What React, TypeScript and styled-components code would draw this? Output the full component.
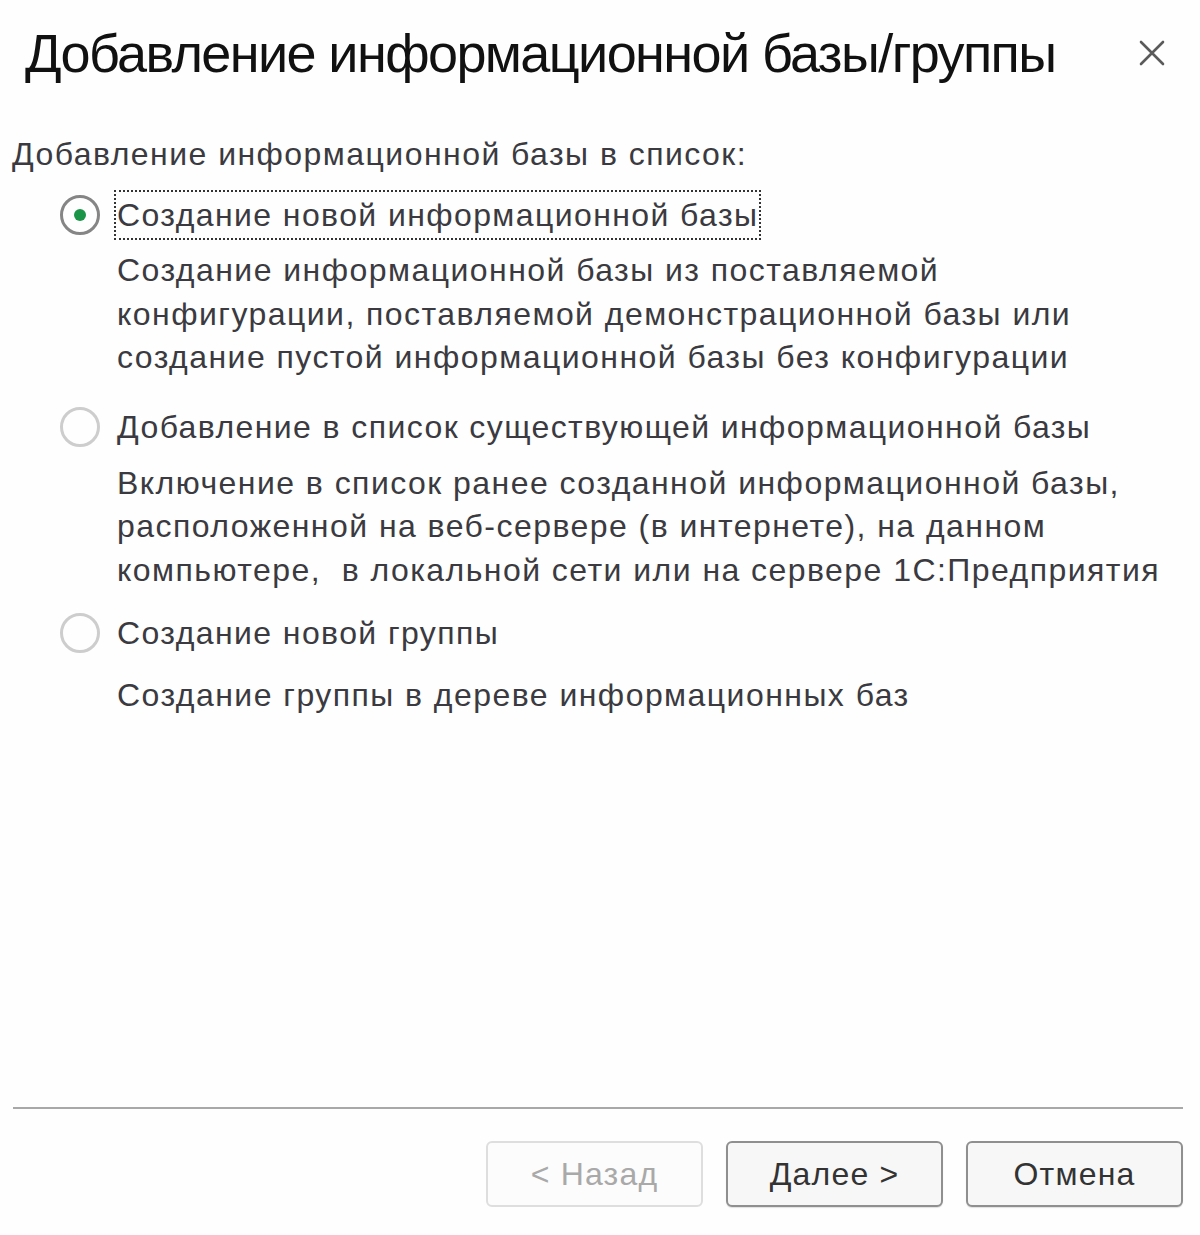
import styled, { createGlobalStyle } from "styled-components";

const GlobalStyle = createGlobalStyle`
  html, body {
    margin: 0;
    padding: 0;
    background: #ffffff;
  }
  body {
    font-family: "Liberation Sans", Arial, sans-serif;
  }
`;

const Dialog = styled.div`
  width: 1200px;
  height: 1235px;
  box-sizing: border-box;
  display: flex;
  flex-direction: column;
  background: #fefefe;
`;

const TitleBar = styled.div`
  display: flex;
  align-items: center;
  justify-content: space-between;
  padding: 24px 30px 0 25px;
  height: 58px;
`;

const Title = styled.h1`
  margin: 0;
  font-size: 54px;
  line-height: 54px;
  font-weight: normal;
  color: #111;
  letter-spacing: -1.6px;
`;

const CloseButton = styled.button`
  border: none;
  background: none;
  padding: 0;
  width: 36px;
  height: 36px;
  display: flex;
  align-items: center;
  justify-content: center;
  cursor: pointer;
`;

const Body = styled.div`
  flex: 1;
  padding: 50px 0 0 12px;
  display: flex;
  flex-direction: column;
`;

const Caption = styled.div`
  font-size: 32px;
  line-height: 44px;
  color: #3a3a40;
  letter-spacing: 1.45px;
`;

const Options = styled.div`
  display: flex;
  flex-direction: column;
  padding-left: 48px;
`;

const Option = styled.div<{ $gap: number }>`
  display: flex;
  flex-direction: column;
  margin-top: ${(p) => p.$gap}px;
`;

const OptionRow = styled.label`
  display: flex;
  align-items: center;
  gap: 17px;
  cursor: pointer;
`;

const Radio = styled.span<{ $checked?: boolean }>`
  width: 40px;
  height: 40px;
  border-radius: 50%;
  box-sizing: border-box;
  border: 3px solid ${(p) => (p.$checked ? "#858585" : "#cdcdcd")};
  display: flex;
  align-items: center;
  justify-content: center;
  flex-shrink: 0;
  &::after {
    content: "";
    width: 12px;
    height: 12px;
    border-radius: 50%;
    background: ${(p) => (p.$checked ? "#1a9548" : "transparent")};
  }
`;

const OptionLabel = styled.span<{ $focused?: boolean }>`
  font-size: 32px;
  line-height: 44px;
  color: #3a3a40;
  letter-spacing: 1.4px;
  padding: 1px 1px;
  border: 2px dotted ${(p) => (p.$focused ? "#333" : "transparent")};
  margin-left: -3px;
`;

const Description = styled.div<{ $gap: number }>`
  padding-left: 57px;
  margin-top: ${(p) => p.$gap}px;
  font-size: 32px;
  line-height: 43.5px;
  color: #3a3a40;
  letter-spacing: 1.45px;
  white-space: pre;
`;

const Separator = styled.hr`
  margin: 0 17px 0 13px;
  border: none;
  height: 2px;
  background: #a8a8a8;
`;

const Footer = styled.div`
  display: flex;
  justify-content: flex-end;
  gap: 23px;
  padding: 32px 17px 28px 0;
`;

const Button = styled.button`
  width: 217px;
  height: 66px;
  box-sizing: border-box;
  border-radius: 6px;
  border: 2px solid ${(p) => (p.disabled ? "#dedede" : "#8f8f8f")};
  background: ${(p) => (p.disabled ? "#fcfcfc" : "#f7f7f7")};
  box-shadow: ${(p) => (p.disabled ? "none" : "0 1px 1px rgba(0,0,0,0.12)")};
  font-family: "Liberation Sans", Arial, sans-serif;
  font-size: 32px;
  letter-spacing: 1.2px;
  color: ${(p) => (p.disabled ? "#a9a9a9" : "#333")};
  cursor: ${(p) => (p.disabled ? "default" : "pointer")};
`;

const options = [
  {
    label: "Создание новой информационной базы",
    lines: [
      "Создание информационной базы из поставляемой",
      "конфигурации, поставляемой демонстрационной базы или",
      "создание пустой информационной базы без конфигурации",
    ],
    checked: true,
    gap: 14,
    descGap: 9,
  },
  {
    label: "Добавление в список существующей информационной базы",
    lines: [
      "Включение в список ранее созданной информационной базы,",
      "расположенной на веб-сервере (в интернете), на данном",
      "компьютере,  в локальной сети или на сервере 1С:Предприятия",
    ],
    checked: false,
    gap: 22,
    descGap: 10,
  },
  {
    label: "Создание новой группы",
    lines: ["Создание группы в дереве информационных баз"],
    checked: false,
    gap: 16,
    descGap: 16,
  },
];

const App = () => {
  return (
    <>
      <GlobalStyle />
      <Dialog>
        <TitleBar>
          <Title>Добавление информационной базы/группы</Title>
          <CloseButton aria-label="Закрыть">
            <svg width="30" height="30" viewBox="0 0 30 30">
              <path
                d="M4 4 L26 26 M26 4 L4 26"
                stroke="#5a5a5a"
                strokeWidth="2.6"
                strokeLinecap="round"
              />
            </svg>
          </CloseButton>
        </TitleBar>
        <Body>
          <Caption>Добавление информационной базы в список:</Caption>
          <Options>
            {options.map((o) => (
              <Option key={o.label} $gap={o.gap}>
                <OptionRow>
                  <Radio $checked={o.checked} />
                  <OptionLabel $focused={o.checked}>{o.label}</OptionLabel>
                </OptionRow>
                <Description $gap={o.descGap}>
                  {o.lines.map((l) => (
                    <div key={l}>{l}</div>
                  ))}
                </Description>
              </Option>
            ))}
          </Options>
        </Body>
        <Separator />
        <Footer>
          <Button disabled>&lt; Назад</Button>
          <Button>Далее &gt;</Button>
          <Button>Отмена</Button>
        </Footer>
      </Dialog>
    </>
  );
};

export default App;
